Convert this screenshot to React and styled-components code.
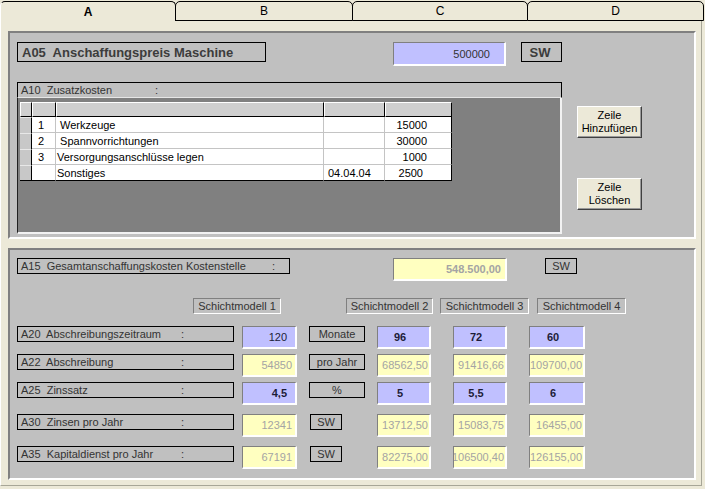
import React from "react";
import styled, { createGlobalStyle } from "styled-components";

const GlobalStyle = createGlobalStyle`
  html, body { margin: 0; padding: 0; background: #ECE9D8; }
  body { font-family: "Liberation Sans", Arial, sans-serif; font-size: 11px; color: #000; }
  * { box-sizing: border-box; }
`;

const Root = styled.div`
  width: 705px;
  height: 489px;
  overflow: hidden;
  background: #ECE9D8;
`;

const TabBar = styled.div`
  display: flex;
  height: 21px;
  padding-top: 1px;
`;

const Tab = styled.div`
  width: ${(p) => p.$w}px;
  height: 20px;
  margin-left: ${(p) => (p.$first ? 0 : -1)}px;
  border: 1px solid #000;
  border-left-color: ${(p) => (p.$first ? "#fff" : "#000")};
  border-bottom: ${(p) => (p.$active ? "none" : "1px solid #000")};
  border-radius: 5px 5px 0 0;
  background: #ECE9D8;
  display: flex;
  align-items: center;
  justify-content: center;
  font-size: 12px;
  font-weight: ${(p) => (p.$active ? "bold" : "normal")};
  color: #000;
  position: relative;
  z-index: ${(p) => (p.$active ? 1 : 0)};
`;

const Page = styled.div`
  width: 702px;
  height: 465px;
  border-left: 1px solid #fff;
  border-right: 1px solid #a7a697;
  border-bottom: 1px solid #a7a697;
  padding: 10px 5px 5px 7px;
  display: flex;
  flex-direction: column;
  gap: 9px;
`;

const Panel = styled.div`
  height: ${(p) => p.$h}px;
  background: #C0C0C0;
  border: 2px solid;
  border-color: #808080 #fff #fff #808080;
  padding: ${(p) => p.$pt}px 0 0 7px;
`;

const Row = styled.div`
  display: flex;
  align-items: flex-start;
  margin-top: ${(p) => p.$mt || 0}px;
`;

const TitleBox = styled.div`
  width: 249px;
  height: 20px;
  border: 1px solid #000;
  padding-left: 4px;
  display: flex;
  align-items: center;
  font-size: 13px;
  font-weight: bold;
  color: #3c3c3c;
  white-space: pre;
`;

const BoldTag = styled.div`
  width: 41px;
  height: 20px;
  margin-left: ${(p) => p.$ml}px;
  border: 1px solid #000;
  display: flex;
  align-items: center;
  justify-content: center;
  padding-right: 3px;
  font-size: 13px;
  font-weight: bold;
  color: #3c3c3c;
`;

const Field = styled.div`
  width: ${(p) => p.$w}px;
  height: ${(p) => p.$h || 23}px;
  margin-left: ${(p) => p.$ml || 0}px;
  grid-column: ${(p) => p.$c || "auto"};
  border-style: solid;
  border-width: 1px 2px 2px 1px;
  border-color: #808080 #fff #fff #808080;
  background: ${(p) => (p.$yellow ? "#FFFFC0" : "#C0C0FF")};
  color: ${(p) => (p.$yellow ? "#a4a4a4" : "#1c1c38")};
  font-weight: ${(p) => (p.$bold ? "bold" : "normal")};
  display: flex;
  align-items: center;
  justify-content: ${(p) => (p.$center ? "center" : "flex-end")};
  padding-right: ${(p) => p.$pr ?? 2}px;
  overflow: hidden;
  white-space: nowrap;
  font-size: 11px;
`;

const LabelBox = styled.div`
  width: ${(p) => p.$w}px;
  height: 16px;
  grid-column: ${(p) => p.$c || "auto"};
  border: 1px solid #000;
  padding-left: 3px;
  display: flex;
  align-items: center;
  color: #333;
  white-space: pre;
`;

const LabelText = styled.span`
  display: inline-block;
  width: ${(p) => p.$tw}px;
`;

const Unit = styled.div`
  width: ${(p) => p.$w}px;
  height: 16px;
  margin-left: ${(p) => p.$ml || 0}px;
  grid-column: ${(p) => p.$c || "auto"};
  border: 1px solid #000;
  display: flex;
  align-items: center;
  justify-content: center;
  color: #333;
`;

const Caption = styled.div`
  width: ${(p) => p.$w}px;
  height: 16px;
  margin-left: ${(p) => p.$ml}px;
  border: 1px solid;
  border-color: #808080 #fff #fff #808080;
  display: flex;
  align-items: center;
  justify-content: center;
  color: #333;
  white-space: nowrap;
`;

const Frame = styled.div`
  width: 545px;
  display: flex;
  flex-direction: column;
`;

const FrameHeader = styled.div`
  height: 16px;
  border: 1px solid #000;
  border-bottom: 1px solid #e6e6e6;
  padding-left: 3px;
  display: flex;
  align-items: center;
  color: #333;
  white-space: pre;
`;

const FrameBody = styled.div`
  height: 136px;
  background: #808080;
  border-left: 1px solid #202020;
  border-right: 2px solid #f2f2f2;
  border-bottom: 2px solid #f2f2f2;
  padding: 4px 0 0 2px;
`;

const Grid = styled.div`
  display: grid;
  width: 432px;
  grid-template-columns: 12px 24px 268px 61px 67px;
  grid-template-rows: 15px repeat(4, 16px);
`;

const HeadCell = styled.div`
  background: #CFCFCF;
  border-top: 1px solid #fff;
  border-left: 1px solid #fff;
  border-right: 1px solid #000;
  border-bottom: 1px solid #000;
`;

const SelCell = styled.div`
  background: #C8C8C8;
  border-top: 1px solid #e8e8e8;
  border-right: 1px solid #000;
  border-bottom: ${(p) => (p.$last ? "1px solid #000" : "none")};
`;

const Cell = styled.div`
  background: #fff;
  border-right: 1px solid ${(p) => (p.$lastCol ? "#000" : "#c4c4c4")};
  border-bottom: 1px solid ${(p) => (p.$last ? "#000" : "#c4c4c4")};
  display: flex;
  align-items: center;
  justify-content: ${(p) => (p.$right ? "flex-end" : "flex-start")};
  padding-left: ${(p) => p.$pl || 0}px;
  padding-right: ${(p) => p.$pr || 0}px;
  white-space: pre;
  color: #000;
  font-size: 11px;
`;

const Buttons = styled.div`
  display: flex;
  flex-direction: column;
  gap: 40px;
  margin-left: 15px;
  padding-top: 24px;
`;

const Button = styled.button`
  width: 65px;
  height: 32px;
  padding: 0;
  background: #ECE9D8;
  border: 1px solid;
  border-color: #fff #404040 #404040 #fff;
  box-shadow: inset -1px -1px 0 #9a9a9a;
  font-family: "Liberation Sans", Arial, sans-serif;
  font-size: 11px;
  line-height: 13px;
  color: #000;
  text-align: center;
`;

const DataRow = styled.div`
  display: grid;
  grid-template-columns: 217px 8px 55px 12px 56px 12px 54px 22px 54px 22px 56px;
  align-items: start;
  margin-top: ${(p) => p.$mt}px;
`;

const gridRows = [
  { nr: "1", text: " Werkzeuge", date: "", amt: "15000", pr: 24 },
  { nr: "2", text: " Spannvorrichtungen", date: "", amt: "30000", pr: 24 },
  { nr: "3", text: "Versorgungsanschlüsse legen", date: "", amt: "1000", pr: 24 },
  { nr: "", text: "Sonstiges", date: "04.04.04", amt: "2500", pr: 28 },
];

const dataRows = [
  {
    label: "A20  Abschreibungszeitraum", mt: 12,
    v1: "120", y1: false, b1: false, unit: "Monate", uw: 56,
    rest: ["96", "72", "60"], yr: false,
  },
  {
    label: "A22  Abschreibung", mt: 5,
    v1: "54850", y1: true, unit: "pro Jahr", uw: 56,
    rest: ["68562,50", "91416,66", "109700,00"], yr: true,
  },
  {
    label: "A25  Zinssatz", mt: 5,
    v1: "4,5", y1: false, b1: true, unit: "%", uw: 56,
    rest: ["5", "5,5", "6"], yr: false,
  },
  {
    label: "A30  Zinsen pro Jahr", mt: 9,
    v1: "12341", y1: true, unit: "SW", uw: 32,
    rest: ["13712,50", "15083,75", "16455,00"], yr: true,
  },
  {
    label: "A35  Kapitaldienst pro Jahr", mt: 9,
    v1: "67191", y1: true, unit: "SW", uw: 32,
    rest: ["82275,00", "106500,40", "126155,00"], yr: true,
  },
];

const restCols = [7, 9, 11];
const restW = [54, 54, 56];

export default function App() {
  return (
    <Root>
      <GlobalStyle />
      <TabBar>
        <Tab $w={176} $first $active>A</Tab>
        <Tab $w={178}>B</Tab>
        <Tab $w={176}>C</Tab>
        <Tab $w={177}>D</Tab>
      </TabBar>
      <Page>
        <Panel $h={208} $pt={9}>
          <Row>
            <TitleBox>A05  Anschaffungspreis Maschine</TitleBox>
            <Field $w={113} $h={24} $ml={127} $pr={14} style={{ color: "#333" }}>
              500000
            </Field>
            <BoldTag $ml={15}>SW</BoldTag>
          </Row>
          <Row $mt={16}>
            <Frame>
              <FrameHeader>
                <LabelText $tw={134}>A10  Zusatzkosten</LabelText>:
              </FrameHeader>
              <FrameBody>
                <Grid>
                  <HeadCell />
                  <HeadCell />
                  <HeadCell />
                  <HeadCell />
                  <HeadCell />
                  {gridRows.map((r, i) => {
                    const last = i === gridRows.length - 1;
                    return (
                      <React.Fragment key={i}>
                        <SelCell $last={last} />
                        <Cell $last={last} $pl={6}>{r.nr}</Cell>
                        <Cell $last={last} $pl={1}>{r.text}</Cell>
                        <Cell $last={last} $pl={4}>{r.date}</Cell>
                        <Cell $last={last} $lastCol $right $pr={r.pr}>{r.amt}</Cell>
                      </React.Fragment>
                    );
                  })}
                </Grid>
              </FrameBody>
            </Frame>
            <Buttons>
              <Button>Zeile<br />Hinzufügen</Button>
              <Button>Zeile<br />Löschen</Button>
            </Buttons>
          </Row>
        </Panel>
        <Panel $h={232} $pt={8}>
          <Row>
            <LabelBox $w={273}>
              <LabelText $tw={251}>A15  Gesamtanschaffungskosten Kostenstelle</LabelText>:
            </LabelBox>
            <Field $w={114} $ml={103} $yellow $bold $pr={4}>548.500,00</Field>
            <Unit $w={32} $ml={38}>SW</Unit>
          </Row>
          <Row $mt={17}>
            <Caption $w={88} $ml={176}>Schichtmodell 1</Caption>
            <Caption $w={87} $ml={65}>Schichtmodell 2</Caption>
            <Caption $w={89} $ml={7}>Schichtmodell 3</Caption>
            <Caption $w={89} $ml={8}>Schichtmodell 4</Caption>
          </Row>
          {dataRows.map((r) => (
            <DataRow key={r.label} $mt={r.mt}>
              <LabelBox $w={217} $c={1}>
                <LabelText $tw={160}>{r.label}</LabelText>:
              </LabelBox>
              <Field $c={3} $w={55} $yellow={r.y1} $bold={r.b1} $pr={r.y1 ? 3 : 8}>
                {r.v1}
              </Field>
              <Unit $c={5} $w={r.uw} $ml={r.uw === 32 ? 1 : 0}>{r.unit}</Unit>
              {r.rest.map((v, k) => (
                <Field
                  key={k}
                  $c={restCols[k]}
                  $w={restW[k]}
                  $yellow={r.yr}
                  $bold={!r.yr}
                  $center={!r.yr}
                  $pr={r.yr ? 1 : 7}
                >
                  {v}
                </Field>
              ))}
            </DataRow>
          ))}
        </Panel>
      </Page>
    </Root>
  );
}
